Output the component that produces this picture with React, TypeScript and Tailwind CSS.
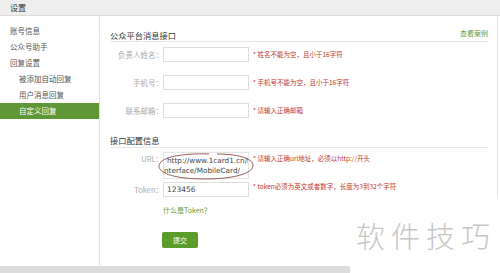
const cjk = { fontFamily: '"Noto Sans CJK SC", "DejaVu Sans", sans-serif' };

function FieldRow({ label, error, className = "" }: { label: string; error: string; className?: string }) {
  return (
    <div className={`flex items-center h-[15px] ${className}`}>
      <div className="w-[53px] text-right text-[7.5px] text-[#aaaaaa] leading-[15px]">{label}</div>
      <div className="w-[86px] h-[15px] border border-[#dddddd] bg-white" />
      <div className="ml-[4px] text-[6.5px] text-[#c0392b] leading-[15px]">{error}</div>
    </div>
  );
}

export default function App() {
  const menu = [
    { name: "账号信息", sub: false },
    { name: "公众号助手", sub: false },
    { name: "回复设置", sub: false },
    { name: "被添加自动回复", sub: true },
    { name: "用户消息回复", sub: true },
    { name: "自定义回复", sub: true, active: true },
  ];

  return (
    <div className="relative w-[500px] h-[273px] bg-white overflow-hidden" style={cjk}>
      {/* header */}
      <div className="h-[16px] bg-[#eeeeee] border-b border-[#dadada] pl-[10px] text-[8px] leading-[15px] text-[#333333]">
        设置
      </div>

      <div className="flex h-[250px]">
        {/* sidebar */}
        <div className="w-[100px] border-r border-[#e2e2e2] pt-[7px]">
          {menu.map((m) => (
            <div
              key={m.name}
              className={`h-[16px] leading-[16px] text-[7.5px] ${m.sub ? "pl-[19px]" : "pl-[10px]"} ${
                m.active ? "bg-[#5f9636] text-white" : "text-[#555555]"
              }`}
            >
              {m.name}
            </div>
          ))}
        </div>

        {/* main */}
        <div className="w-[398px] border-r border-[#e2e2e2] pl-[10px] pr-[9px]">
          <div className="h-[26px] flex items-end justify-between border-b border-[#e6e6e6]">
            <div className="text-[8.25px] leading-[12px] text-[#333333]">公众平台消息接口</div>
            <div className="text-[7px] leading-[12px] pb-[2px] text-[#5f9a3c]">查看案例</div>
          </div>

          <FieldRow className="mt-[5px]" label="负责人姓名：" error="* 姓名不能为空，且小于16字符" />
          <FieldRow className="mt-[13px]" label="手机号：" error="* 手机号不能为空，且小于16字符" />
          <FieldRow className="mt-[13px]" label="联系邮箱：" error="* 请输入正确邮箱" />

          <div className="h-[30px] flex items-end border-b border-[#e6e6e6]">
            <div className="text-[8.25px] leading-[13px] text-[#333333]">接口配置信息</div>
          </div>

          {/* URL */}
          <div className="relative flex mt-[4px] h-[27px]">
            <div className="w-[53px] text-right text-[7.5px] text-[#aaaaaa] leading-[14px]">URL：</div>
            <div
              className="w-[86px] h-[27px] border border-[#e4e4e4] overflow-hidden pt-[3px] text-[7.25px] leading-[10px] text-[#444444] whitespace-nowrap"
              style={{ fontFamily: '"DejaVu Sans", sans-serif' }}
            >
              <div className="pl-[3px]">http://www.1card1.cn/I</div>
              <div>nterface/MobileCard/</div>
            </div>
            <div className="ml-[4px] text-[6.5px] text-[#c0392b] leading-[12px]">* 请输入正确url地址，必须以http://开头</div>
            <svg className="absolute left-[47px] top-[0px]" width="98" height="29" viewBox="0 0 98 29">
              <path
                d="M60 2 C85 2 97 8 96 14 C95 22 75 27 48 27 C20 27 2 22 2 14 C2 6 22 1 52 2"
                fill="none"
                stroke="#8a4b4b"
                strokeWidth="0.9"
              />
            </svg>
          </div>

          {/* Token */}
          <div className="flex items-center mt-[3px] h-[15px]">
            <div className="w-[53px] text-right text-[7.5px] text-[#aaaaaa] leading-[15px]">Token：</div>
            <div
              className="w-[86px] h-[15px] border border-[#dddddd] pl-[3px] text-[7.5px] leading-[13px] text-[#444444]"
              style={{ fontFamily: '"DejaVu Sans", sans-serif' }}
            >
              123456
            </div>
            <div className="ml-[4px] -mt-[8px] text-[6.5px] text-[#c0392b] leading-[12px]">
              * token必须为英文或者数字，长度为3到32个字符
            </div>
          </div>

          <div className="ml-[53px] mt-[7px] text-[7px] leading-[12px] text-[#5f9a3c]">什么是Token？</div>

          <div className="ml-[52px] mt-[16px] w-[36px] h-[16px] rounded-[2px] bg-[#5a9d2a] text-white text-[7px] leading-[16px] text-center">
            提交
          </div>
        </div>
      </div>

      {/* bottom bar */}
      <div className="h-[7px] bg-[#dcdcdc]" />

      {/* watermark */}
      <div className="absolute left-[350px] top-[197px] w-[150px] h-[76px] bg-white flex items-center pl-[6px]">
        <span className="text-[29px] leading-[30px] tracking-[6px] text-[#c6c6c6] font-light">软件技巧</span>
      </div>
    </div>
  );
}
